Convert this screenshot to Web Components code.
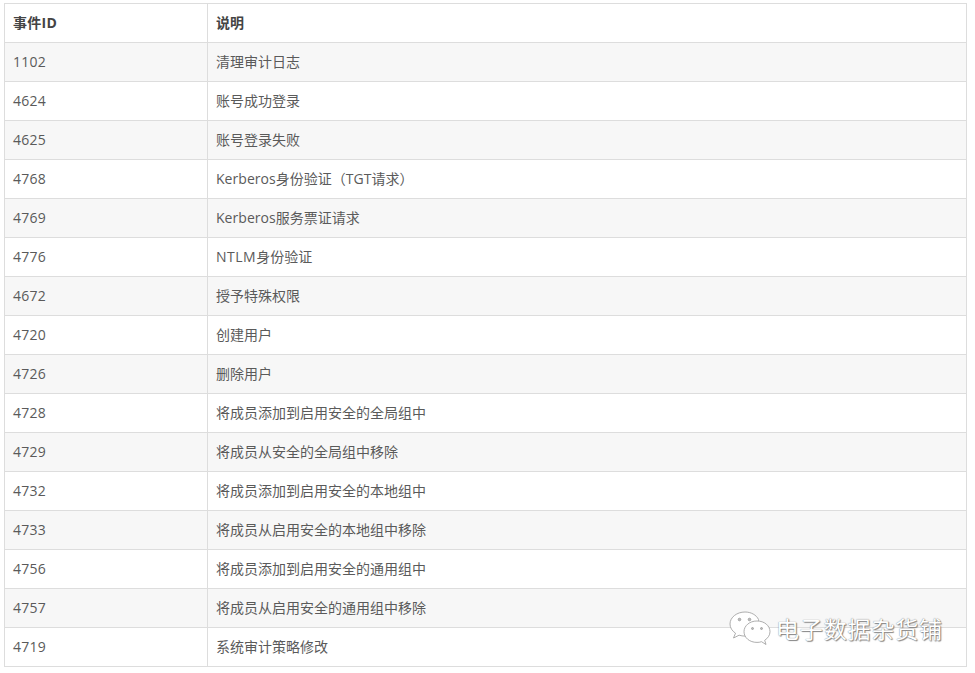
<!DOCTYPE html>
<html lang="zh">
<head>
<meta charset="utf-8">
<title>事件ID</title>
<style>
    body {
        margin: 0;
        background: #fff;
        font-family: "Open Sans", "Noto Sans CJK SC", sans-serif;
    }
    .lat { letter-spacing: 0.3px; }
    .tight { letter-spacing: 0.05px; }
</style>
</head>
<body>
<event-table>
    <event-row head><span><span class="lat">事件ID</span></span><span>说明</span></event-row>
    <event-row><span>1102</span><span>清理审计日志</span></event-row>
    <event-row><span>4624</span><span>账号成功登录</span></event-row>
    <event-row><span>4625</span><span>账号登录失败</span></event-row>
    <event-row><span>4768</span><span><span><span class="tight">Kerberos</span>身份验证（<span class="tight">TGT</span>请求）</span></span></event-row>
    <event-row><span>4769</span><span><span><span class="tight">Kerberos</span>服务票证请求</span></span></event-row>
    <event-row><span>4776</span><span><span><span class="lat" style="letter-spacing:.5px">NTLM</span>身份验证</span></span></event-row>
    <event-row><span>4672</span><span>授予特殊权限</span></event-row>
    <event-row><span>4720</span><span>创建用户</span></event-row>
    <event-row><span>4726</span><span>删除用户</span></event-row>
    <event-row><span>4728</span><span>将成员添加到启用安全的全局组中</span></event-row>
    <event-row><span>4729</span><span>将成员从安全的全局组中移除</span></event-row>
    <event-row><span>4732</span><span>将成员添加到启用安全的本地组中</span></event-row>
    <event-row><span>4733</span><span>将成员从启用安全的本地组中移除</span></event-row>
    <event-row><span>4756</span><span>将成员添加到启用安全的通用组中</span></event-row>
    <event-row><span>4757</span><span>将成员从启用安全的通用组中移除</span></event-row>
    <event-row><span>4719</span><span>系统审计策略修改</span></event-row>
</event-table>
<wechat-mark>电子数据杂货铺</wechat-mark>

<script>
class EventTable extends HTMLElement {
    constructor() {
        super();
        this.attachShadow({ mode: 'open' });
        this.shadowRoot.innerHTML = `
            <style>
                :host {
                    display: block;
                    width: 963px;
                    margin: 3px 0 0 4px;
                    box-sizing: border-box;
                    border-top: 1px solid #ddd;
                    border-left: 1px solid #ddd;
                    border-right: 1px solid #ddd;
                }
            </style>
            <slot></slot>
        `;
    }

    connectedCallback() {
        // header is not striped, so the first data row gets the grey
        [...this.querySelectorAll('event-row:not([head])')].forEach((row, i) => {
            if (i % 2 === 0) row.setAttribute('striped', '');
        });
    }
}

class EventRow extends HTMLElement {
    constructor() {
        super();
        this.attachShadow({ mode: 'open' });
        this.shadowRoot.innerHTML = `
            <style>
                :host {
                    display: grid;
                    grid-template-columns: 202px 1fr;
                    height: 39px;
                    box-sizing: border-box;
                    border-bottom: 1px solid #ddd;
                    background: #fff;
                    color: #5a5a5a;
                    font-size: 14px;
                }
                :host([striped]) { background: #f7f7f7; }
                :host([head]) { font-weight: 700; color: #444; }
                ::slotted(span) {
                    display: flex;
                    align-items: center;
                    padding: 0 0 2px 8px;
                    letter-spacing: 0.25px;
                }
                ::slotted(span:last-child) {
                    border-left: 1px solid #ddd;
                    letter-spacing: 0;
                }
            </style>
            <slot></slot>
        `;
    }
}

class WechatMark extends HTMLElement {
    constructor() {
        super();
        this.attachShadow({ mode: 'open' });
        this.shadowRoot.innerHTML = `
            <style>
                :host {
                    position: absolute;
                    left: 729px;
                    top: 610px;
                    display: flex;
                    align-items: center;
                    gap: 5px;
                    color: #fff;
                    font-size: 23px;
                    letter-spacing: 0.85px;
                    text-shadow: 0 0 1px #666, 1px 1px 1px #888;
                }
                svg { width: 42px; height: 36px; flex: none; }
            </style>
            <svg viewBox="0 0 42 36" fill="#fff" stroke="#999" stroke-width="0.8">
                <path d="M16 2C8 2 1 7.200 1 14c0 3.800 2.200 7 5.500 9.200L4.500 28l5.600-2.800c2 .6 3.900 .9 5.900 .9 1 0 2-.1 3-.2C28 20 30 12 29.500 9.500 27.500 5 22 2 16 2z"/>
                <circle cx="10.500" cy="9.500" r="1.300" fill="#bbb"/>
                <circle cx="20.500" cy="9.500" r="1.300" fill="#bbb"/>
                <path d="M28 11c-7.500 0-13 4.800-13 10.700S20.500 32.400 28 32.400c1.600 0 3.100-.2 4.500-.7L37 34.500l-1.300-4.200C38.700 28.300 41 25.300 41 21.700 41 15.800 35.500 11 28 11z"/>
                <circle cx="23.500" cy="18.500" r="1" fill="#bbb"/>
                <circle cx="32.500" cy="18.500" r="1" fill="#bbb"/>
            </svg>
            <span><slot></slot></span>
        `;
    }
}

customElements.define('event-table', EventTable);
customElements.define('event-row', EventRow);
customElements.define('wechat-mark', WechatMark);
</script>
</body>
</html>
